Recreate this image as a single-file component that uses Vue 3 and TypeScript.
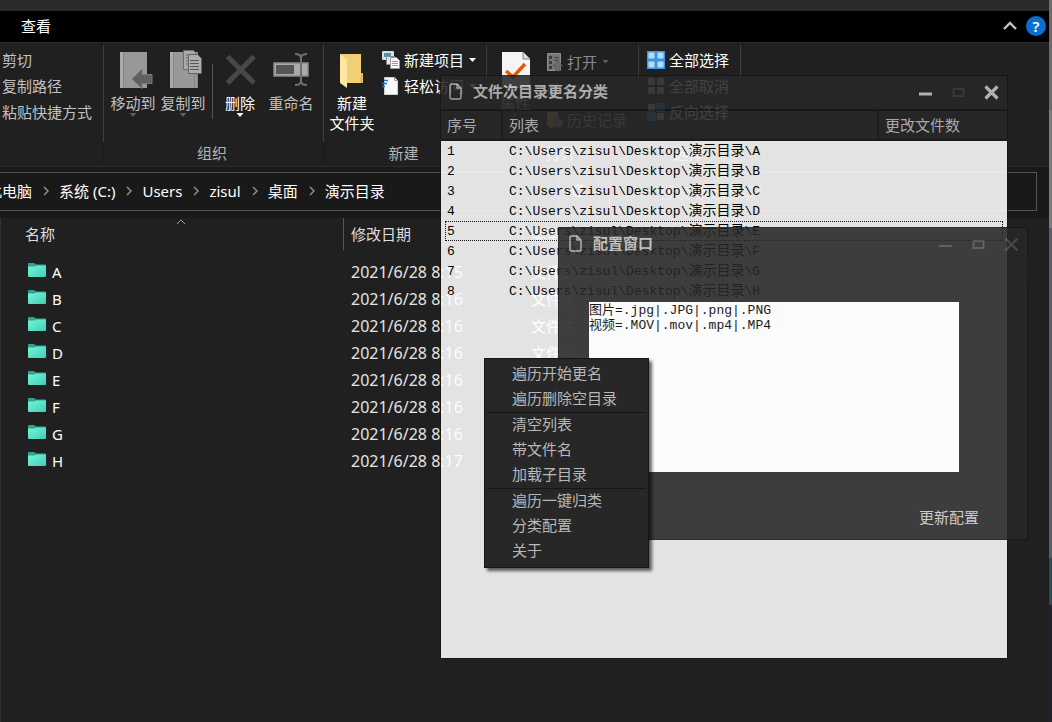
<script setup lang="ts">
import { ref } from 'vue'

interface FileRow { name: string; date: string }
interface ListRow { id: number; folder: string }

const crumbs: string[] = ['此电脑', '系统 (C:)', 'Users', 'zisul', '桌面', '演示目录']

const files: FileRow[] = [
  { name: 'A', date: '2021/6/28 8:15' },
  { name: 'B', date: '2021/6/28 8:16' },
  { name: 'C', date: '2021/6/28 8:16' },
  { name: 'D', date: '2021/6/28 8:16' },
  { name: 'E', date: '2021/6/28 8:16' },
  { name: 'F', date: '2021/6/28 8:16' },
  { name: 'G', date: '2021/6/28 8:16' },
  { name: 'H', date: '2021/6/28 8:17' },
]

const listRows: ListRow[] = files.map((f, i) => ({ id: i + 1, folder: f.name }))
const basePath = 'C:\\Users\\zisul\\Desktop\\'
const selectedId = ref<number>(5)

const menuGroups: string[][] = [
  ['遍历开始更名', '遍历删除空目录'],
  ['清空列表', '带文件名', '加载子目录'],
  ['遍历一键归类', '分类配置', '关于'],
]

const config = ref<string>('图片=.jpg|.JPG|.png|.PNG\n视频=.MOV|.mov|.mp4|.MP4')
</script>

<template>
  <div class="desktop">
    <main class="explorer">
      <div class="caption-strip"></div>
      <nav class="tabs">
        <button class="tab" type="button">查看</button>
        <div class="tab-tools">
          <button type="button" aria-label="折叠功能区">
            <svg width="16" height="12" viewBox="0 0 16 12"><path d="M2 9 L8 3 L14 9" fill="none" stroke="#c4c4c4" stroke-width="2.4" /></svg>
          </button>
          <button class="help" type="button" aria-label="帮助">?</button>
        </div>
      </nav>

      <section class="ribbon">
        <div class="group clipboard">
          <div class="items stack">
            <button class="small muted" type="button">剪切</button>
            <button class="small muted" type="button">复制路径</button>
            <button class="small muted" type="button">粘贴快捷方式</button>
          </div>
        </div>

        <div class="group organize">
          <div class="items">
            <button class="big muted" type="button">
              <svg width="36" height="40" viewBox="0 0 36 40">
                <path d="M5 2h27v36H5z" fill="#98989a" /><path d="M5 2h3v36H5z" fill="#aaaaac" /><path d="M8.500 3v34" stroke="#868688" />
                <path d="M17 29 L27 19 V24.500 H37 V33.500 H27 V38.500 Z" fill="#606062" stroke="#79797b" />
              </svg>
              <span>移动到</span><i class="caret"></i>
            </button>
            <button class="big muted" type="button">
              <svg width="36" height="40" viewBox="0 0 36 40">
                <path d="M5 2h28v36H5z" fill="#98989a" /><path d="M5 2h3v36H5z" fill="#aaaaac" /><path d="M8.500 3v34M29.500 38V26l3-2v14" stroke="#868688" fill="none" />
                <path d="M18.500 .5h10l4 4v15h-14z" fill="#a8a8aa" stroke="#6c6c6e" />
                <path d="M21 5h6M21 8h4M21 11h4M21 14h4" stroke="#6c6c6e" />
                <path d="M23.500 4.500h9l4 4v15h-13z" fill="#adadaf" stroke="#626264" />
                <path d="M25 10.500h9M25 13.500h9M25 16.500h9M25 19.500h9" stroke="#58585a" />
              </svg>
              <span>复制到</span><i class="caret"></i>
            </button>
            <div class="divider"></div>
            <button class="big delete" type="button">
              <svg width="36" height="40" viewBox="0 0 36 40"><path d="M5.500 6.500 L32 33 M32 6.500 L5.500 33" stroke="#48484a" stroke-width="5" /></svg>
              <span>删除</span><i class="caret"></i>
            </button>
            <button class="big rename muted" type="button">
              <svg width="38" height="40" viewBox="0 0 38 40">
                <path d="M2 13h34v13H2z" fill="#aaaaac" stroke="#8a8a8c" stroke-width="1.500" /><path d="M4 15h18v9H4z" fill="#555557" />
                <path d="M23 4q6 0 6 4v23q0 4-6 4M35 4q-6 0-6 4M29 31q0 4 6 4" fill="none" stroke="#6f6f71" stroke-width="2" />
              </svg>
              <span>重命名</span>
            </button>
          </div>
          <div class="label">组织</div>
        </div>

        <div class="group create">
          <div class="items">
            <button class="big" type="button">
              <svg width="36" height="40" viewBox="0 0 36 40">
                <path d="M6 4h21v19l2 1v9H13z" fill="#f1cf74" /><path d="M27 23h2v10h-3z" fill="#e2b95a" />
                <path d="M6 4 L13 10 V38 L6 33 Z" fill="#fde7a2" />
              </svg>
              <span>新建<br />文件夹</span>
            </button>
            <div class="stack">
              <button class="small" type="button">
                <svg width="18" height="18" viewBox="0 0 18 18">
                  <path d="M.5 .5h11v8H.5z" fill="#cfe7f3" stroke="#d8d8d8" /><path d="M2 2h7v4H2z" fill="#4a93b5" />
                  <path d="M4.500 5.500h8v8h-8z" fill="#e6e6e6" stroke="#8a8a8a" />
                  <path d="M8.500 6.500h6l3 3v8h-9z" fill="#fafafa" stroke="#999" /><path d="M10 10.500h6M10 12.500h6M10 14.500h6" stroke="#7ba6cf" />
                </svg>
                新建项目<i class="caret"></i>
              </button>
              <button class="small" type="button">
                <svg width="18" height="18" viewBox="0 0 18 18">
                  <path d="M2.500 .5h10l3 3v14h-13z" fill="#f8f8f8" stroke="#cfcfcf" /><path d="M12.500 .5v3h3" fill="none" stroke="#999" />
                  <path d="M2 3.500h4M0 6.500h5M0 9.500h3" stroke="#1c79d0" stroke-width="1.500" />
                </svg>
                轻松访问<i class="caret"></i>
              </button>
            </div>
          </div>
          <div class="label">新建</div>
        </div>

        <div class="group open">
          <div class="items">
            <button class="big props muted" type="button">
              <svg width="36" height="40" viewBox="0 0 36 40">
                <path d="M5 2h21l7 7v29H5z" fill="#f5f5f5" /><path d="M26 2v7h7" fill="#ddd" stroke="#888" />
                <path d="M9 21 L16 27 L28 14" fill="none" stroke="#e8580c" stroke-width="3.500" />
              </svg>
              <span>属性</span><i class="caret"></i>
            </button>
            <div class="stack wide">
              <button class="small dim" type="button">
                <svg width="16" height="18" viewBox="0 0 16 18">
                  <path d="M.5 .5h13v17H.5z" fill="#77777a" stroke="#8c8c8e" /><path d="M2 3h3v3H2zM2 8h3v3H2zM2 13h3v3H2z" fill="#3d3d3f" />
                  <path d="M7 4.500h5M7 7h5" stroke="#444" /><path d="M6 13 L11 8 L16 13 H13 V18 H9 V13 Z" fill="#6d6d6f" stroke="#444" stroke-width=".5" />
                </svg>
                打开<i class="caret"></i>
              </button>
              <button class="small dim" type="button">
                <svg width="16" height="18" viewBox="0 0 16 18"><path d="M1 1h11v16H1z" fill="#77777a" /><path d="M5 13 L13 4" stroke="#333" stroke-width="2" /></svg>
                编辑
              </button>
              <button class="small dim lit" type="button">
                <svg width="16" height="18" viewBox="0 0 16 18"><path d="M0 1h11v14L4 17 0 14z" fill="#c6a850" /><circle cx="11" cy="12" r="5" fill="#77917e" /><path d="M8 12l2 2 4-4" fill="none" stroke="#d0d0d0" /></svg>
                历史记录
              </button>
            </div>
          </div>
          <div class="label">打开</div>
        </div>

        <div class="group select">
          <div class="items stack">
            <button class="small" type="button">
              <svg width="18" height="18" viewBox="0 0 18 18"><path d="M0 0h18v18H0z" fill="#3a96e4" /><path d="M1.500 1.500h6v6h-6zM10.500 1.500h6v6h-6zM1.500 10.500h6v6h-6zM10.500 10.500h6v6h-6z" fill="#b5dcfa" /></svg>
              全部选择
            </button>
            <button class="small" type="button">
              <svg width="18" height="18" viewBox="0 0 18 18"><path d="M1 1h7v7H1zM10 1h7v7h-7zM1 10h7v7H1zM10 10h7v7h-7z" fill="#bcbcbc" /></svg>
              全部取消
            </button>
            <button class="small" type="button">
              <svg width="18" height="18" viewBox="0 0 18 18"><path d="M1 1h7v7H1zM10 10h7v7h-7z" fill="#bcbcbc" /><path d="M9 0h9v9H9zM0 9h9v9H0z" fill="#3f86bd" /></svg>
              反向选择
            </button>
          </div>
          <div class="label">选择</div>
        </div>
      </section>

      <section class="address-row">
        <div class="address">
          <template v-for="(c, i) in crumbs" :key="c">
            <svg v-if="i" class="chev" width="27" height="12" viewBox="0 0 27 12"><path d="M12 2 L16 6 L12 10" fill="none" stroke="#8c8c8c" stroke-width="1.500" /></svg>
            <button type="button">{{ c }}</button>
          </template>
          <button class="refresh" type="button" aria-label="刷新">
            <svg width="14" height="14" viewBox="0 0 14 14"><path d="M11 3A5.500 5.500 0 1 0 12.500 7M11 0v4H7" fill="none" stroke="#ddd" stroke-width="1.500" /></svg>
          </button>
        </div>
        <input class="search" type="search" placeholder="搜索&quot;演示目录&quot;" aria-label="搜索" />
      </section>

      <div class="file-pane">
        <table class="files">
          <colgroup><col class="c-name" /><col class="c-date" /><col /></colgroup>
          <thead>
            <tr>
              <th>
                <svg class="sort" width="10" height="6" viewBox="0 0 10 6"><path d="M1 5 L5 1 L9 5" fill="none" stroke="#a0a0a0" /></svg>
                名称
              </th>
              <th>修改日期</th>
              <th>类型</th>
            </tr>
          </thead>
          <tbody>
            <tr v-for="f in files" :key="f.name">
              <td>
                <span class="file">
                  <svg width="18" height="15" viewBox="0 0 18 15">
                    <defs><linearGradient id="folder-fill" x1="0" y1="0" x2="1" y2="1"><stop offset="0" stop-color="#74f5dc" /><stop offset="1" stop-color="#42cfb4" /></linearGradient></defs>
                    <path d="M0 1q0-1 1-1h5l2 1.500h9q1 0 1 1V6H0z" fill="#2fa58e" />
                    <path d="M0 3.500h7l1-1h10V13q0 1-1 1H1q-1 0-1-1z" fill="url(#folder-fill)" />
                  </svg>
                  {{ f.name }}
                </span>
              </td>
              <td>{{ f.date }}</td>
              <td>文件夹</td>
            </tr>
          </tbody>
        </table>
      </div>
    </main>
    <div class="wallpaper"></div>

    <section class="window rename-window">
      <header class="titlebar">
        <svg width="13" height="18" viewBox="0 0 13 18"><path d="M1 3q0-2 2-2h5l4 4v9q0 2-2 2H3q-2 0-2-2zM8 1v4h4" fill="none" stroke="#b4b4b4" stroke-width="1.400" /></svg>
        <h2>文件次目录更名分类</h2>
        <div class="controls">
          <button type="button" aria-label="最小化"><svg width="15" height="15" viewBox="0 0 15 15"><path d="M1 9h13" stroke="#c4c4c4" stroke-width="3" /></svg></button>
          <button type="button" aria-label="最大化" disabled><svg width="15" height="15" viewBox="0 0 15 15"><path d="M2.500 4h10v7h-10z" fill="none" stroke="#3c3c3c" stroke-width="2" /></svg></button>
          <button type="button" aria-label="关闭"><svg width="15" height="15" viewBox="0 0 15 15"><path d="M1.500 1.500 L13.500 13.500 M13.500 1.500 L1.500 13.500" stroke="#c4c4c4" stroke-width="3.200" /></svg></button>
        </div>
      </header>
      <div class="list-area">
        <table class="list">
          <colgroup><col class="c-id" /><col /><col class="c-count" /></colgroup>
          <thead><tr><th>序号</th><th>列表</th><th>更改文件数</th></tr></thead>
          <tbody>
            <tr v-for="r in listRows" :key="r.id" :class="{ selected: r.id === selectedId }" @click="selectedId = r.id">
              <td>{{ r.id }}</td>
              <td>{{ basePath }}<span class="cjk">演示目录</span>\{{ r.folder }}</td>
              <td></td>
            </tr>
          </tbody>
        </table>
      </div>
    </section>

    <section class="window config-window">
      <header class="titlebar">
        <svg width="13" height="18" viewBox="0 0 13 18"><path d="M1 3q0-2 2-2h5l4 4v9q0 2-2 2H3q-2 0-2-2zM8 1v4h4" fill="none" stroke="#b4b4b4" stroke-width="1.400" /></svg>
        <h2>配置窗口</h2>
        <div class="controls">
          <button type="button" aria-label="最小化"><svg width="15" height="15" viewBox="0 0 15 15"><path d="M1 9h13" stroke="#505050" stroke-width="2" /></svg></button>
          <button type="button" aria-label="最大化"><svg width="15" height="15" viewBox="0 0 15 15"><path d="M2.500 4h10v7h-10z" fill="none" stroke="#505050" stroke-width="2" /></svg></button>
          <button type="button" aria-label="关闭"><svg width="15" height="15" viewBox="0 0 15 15"><path d="M1.500 1.500 L13.500 13.500 M13.500 1.500 L1.500 13.500" stroke="#505050" stroke-width="2" /></svg></button>
        </div>
      </header>
      <textarea v-model="config" aria-label="分类配置" spellcheck="false"></textarea>
      <button class="update" type="button">更新配置</button>
    </section>

    <menu class="context">
      <li v-for="(g, i) in menuGroups" :key="i">
        <button v-for="m in g" :key="m" type="button">{{ m }}</button>
      </li>
    </menu>
  </div>
</template>

<style>
html,
body {
  margin: 0;
  background: #202020;
}
</style>

<style scoped>
* {
  box-sizing: border-box;
}

.desktop {
  position: relative;
  display: flex;
  min-height: 100vh;
  overflow: hidden;
  font: 15px/20px "Noto Sans", "Noto Sans CJK SC", sans-serif;
  color: #fff;
}

button {
  margin: 0;
  padding: 0;
  border: 0;
  background: none;
  color: inherit;
  font: inherit;
  white-space: nowrap;
}

svg {
  display: block;
  flex: none;
  overflow: visible;
}

.explorer {
  display: flex;
  flex: 1;
  flex-direction: column;
  min-width: 0;
  background: #202020;
}

.wallpaper {
  width: 3px;
  background: linear-gradient(#6c6c6e 0 110px, #80797b 110px 228px, #5a5c6a 228px 558px, #2b4b5c 558px 605px, #20242e 605px);
}

.caption-strip {
  height: 11px;
  background: #2b2b2b;
}

.tabs {
  display: flex;
  align-items: center;
  justify-content: space-between;
  height: 31px;
  padding: 0 3px 2px 21px;
  background: #000;
}

.tab-tools {
  display: flex;
  align-items: center;
  gap: 8px;
}

.help {
  width: 20px;
  height: 20px;
  border-radius: 50%;
  background: #0b6fd0;
  font-weight: 600;
}

.ribbon {
  display: flex;
  height: 125px;
  border-top: 1px solid #2b2b2b;
  border-bottom: 1px solid #2c2c2c;
}

.group {
  position: relative;
  display: flex;
  flex-direction: column;
  justify-content: space-between;
  flex: none;
  padding: 4px 0 3px;
}

.group::after {
  content: "";
  position: absolute;
  top: 2px;
  right: 0;
  width: 1px;
  height: 118px;
  background: linear-gradient(#3f3f3f 0 97px, #191919 97px);
}

.clipboard { width: 104px; }
.organize { width: 220px; }
.create { width: 163px; }
.open { width: 152px; }
.select { width: 102px; }

.items {
  display: flex;
}

.organize .items { padding-left: 4px; }
.create .items { padding-left: 3px; }
.open .items { padding-left: 3px; }
.select .items { padding-left: 8px; }
.clipboard .items { padding-left: 2px; }

.stack {
  display: flex;
  flex-direction: column;
  align-items: flex-start;
}

.create .stack { padding-left: 5px; }
.open .stack { padding-left: 7px; }

.small {
  display: flex;
  align-items: center;
  gap: 4px;
  height: 26px;
}

.wide .small {
  height: 29px;
}

.muted { color: #c0c0c0; }
.dim { color: #8a8a8a; }
.lit { color: #b8b8b8; }

.big {
  display: flex;
  flex-direction: column;
  align-items: center;
  width: 50px;
  padding-top: 3px;
}

.big span {
  margin-top: 3px;
}

.big.delete { width: 54px; }
.big.rename { width: 48px; }

.caret {
  width: 7px;
  height: 4px;
  background: currentColor;
  clip-path: polygon(0 0, 100% 0, 50% 100%);
}

.small .caret {
  margin-left: 1px;
}

.muted .caret,
.dim .caret {
  background: #5c5c5c;
}

.divider {
  width: 1px;
  height: 55px;
  margin: 17px 0 0 4px;
  background: #555;
}

.label {
  padding-right: 4px;
  color: #b4b4b4;
  text-align: center;
}

.address-row {
  display: flex;
  gap: 10px;
  padding: 5px 12px 7px 0;
  background: #191919;
}

.address {
  display: flex;
  align-items: center;
  width: 599px;
  height: 39px;
  padding-bottom: 2px;
  border: 1px solid #535353;
  border-left: 0;
  overflow: hidden;
}

.address > button:first-child {
  margin-left: -13px;
}

.address .refresh {
  width: 40px;
  height: 38px;
  margin-left: auto;
  padding-left: 12px;
  border-left: 1px solid #535353;
}

.search {
  flex: 1;
  min-width: 0;
  padding: 0 50px;
  border: 1px solid #535353;
  border-radius: 0;
  background: transparent;
  color: #ddd;
  font: inherit;
}

.file-pane {
  flex: 1;
  box-shadow: inset 2px 0 0 -1px #333;
}

.files {
  width: calc(100% - 21px);
  border-collapse: separate;
  border-spacing: 0;
  table-layout: fixed;
  text-align: left;
}

.c-name { width: 343px; }
.c-date { width: 180px; }

.files th {
  position: relative;
  height: 32px;
  padding: 0 7px;
  border-left: 1px solid #555;
  color: #dedede;
  font-weight: 400;
}

.files th:first-child {
  padding-left: 25px;
  border-left: 0;
}

.sort {
  position: absolute;
  top: 1px;
  left: 176px;
}

.files tbody::before {
  content: "";
  display: block;
  height: 8px;
}

.files td {
  height: 27px;
  padding: 0 8px;
  font-size: 16px;
}

.files td:first-child {
  padding-left: 28px;
}

.files td:nth-child(2) {
  color: #e4e4e4;
}

.files td:last-child {
  font-size: 15px;
}

.files tbody tr:first-child td:last-child {
  border-right: 1px solid #4a5560;
}

.file {
  display: flex;
  align-items: center;
  gap: 6px;
  font-size: 15px;
}

.file svg {
  margin-bottom: 2px;
}

.window {
  position: absolute;
  display: flex;
  flex-direction: column;
  border: 1px solid #161616;
  background: #272727;
  opacity: 0.88;
}

.rename-window {
  top: 75px;
  left: 440px;
  width: 568px;
  height: 584px;
}

.config-window {
  top: 227px;
  left: 558px;
  width: 470px;
  height: 313px;
}

.titlebar {
  display: flex;
  align-items: center;
  height: 33px;
  padding: 0 8px 1px;
}

.titlebar h2 {
  margin: 0 auto 0 11px;
  padding-bottom: 2px;
  color: #bdbdbd;
  font-size: 15px;
  font-weight: 700;
}

.controls {
  display: flex;
  gap: 18px;
}

.config-window .titlebar {
  padding-left: 10px;
}

.list-area {
  flex: 1;
  border-top: 2px solid #181818;
  background: #fff;
}

.list {
  width: 100%;
  border-spacing: 0;
  table-layout: fixed;
  text-align: left;
}

.c-id { width: 62px; }
.c-count { width: 128px; }

.list th {
  height: 30px;
  padding: 0 6px;
  border-right: 2px solid #1c1c1c;
  border-bottom: 2px solid #1a1a1a;
  background: #272727;
  color: #bdbdbd;
  font-weight: 400;
}

.list th:last-child {
  border-right: 0;
}

.list td {
  height: 20px;
  padding: 2px 6px 0;
  color: #000;
  font: 13px/18px "Liberation Mono", "Noto Sans CJK SC", monospace;
  white-space: nowrap;
}

.list .cjk {
  font-size: 14px;
  line-height: 16px;
}

.list tr {
  position: relative;
}

.list .selected td:first-child::after {
  content: "";
  position: absolute;
  inset: 0 4px;
  border: 1px dotted #111;
}

textarea {
  flex: none;
  height: 170px;
  margin: 41px 68px 0 30px;
  padding: 1px 0 0;
  border: 0;
  outline: 0;
  resize: none;
  background: #fff;
  color: #000;
  font: 13px/15px "Liberation Mono", "Noto Sans CJK SC", monospace;
}

.update {
  align-self: flex-end;
  margin: 35px 48px 0 0;
  color: #c8c8c8;
}

.context {
  position: absolute;
  top: 358px;
  left: 484px;
  width: 165px;
  margin: 0;
  padding: 3px 2px;
  border: 1px solid #161616;
  background: #272727;
  box-shadow: 3px 3px 3px rgba(0, 0, 0, 0.6);
  list-style: none;
}

.context li + li {
  border-top: 1px solid #161616;
}

.context button {
  display: block;
  width: 100%;
  height: 25px;
  padding: 0 0 4px 25px;
  color: #b8b8b8;
  text-align: left;
}
</style>
